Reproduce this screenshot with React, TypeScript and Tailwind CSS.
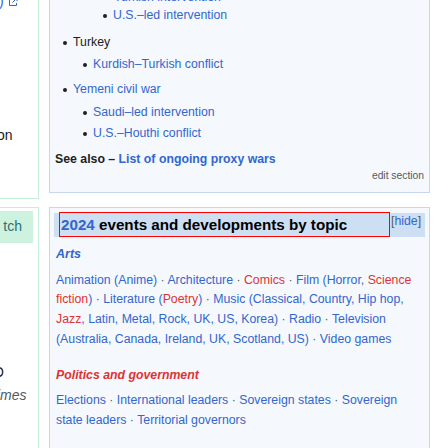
import React from "react";

const B = "text-[#3366cc]";
const R = "text-[#dd3333]";

function Dot() {
  return <span className="text-[#54595d]"> · </span>;
}

function Li({
  text,
  indent,
  mt,
  link = true,
}: {
  text: string;
  indent: number;
  mt: number;
  link?: boolean;
}) {
  return (
    <div className="flex items-center h-[20px]" style={{ marginTop: mt, paddingLeft: indent }}>
      <span className="w-[4px] h-[4px] rounded-full bg-[#202122] mr-[6px] shrink-0" />
      <span className={link ? B : "text-[#202122]"}>{text}</span>
    </div>
  );
}

export default function App() {
  return (
    <div
      className="w-[448px] h-[448px] overflow-hidden bg-white flex text-[12.3px] leading-[19.7px]"
      style={{ fontFamily: '"Liberation Sans", Arial, sans-serif' }}
    >
      {/* left column */}
      <div className="w-[39px] shrink-0 flex flex-col">
        <div className="h-[199px] border-r border-b border-[#c6eed8] relative">
          <div className="absolute left-[-1px] top-[-8px] flex items-center text-[#3366cc] text-[14px]">
            <span>)</span>
            <svg width="10" height="10" viewBox="0 0 10 10" className="ml-[4px] mt-[1px]">
              <path d="M4 1.5H1.5v7h7V6" fill="none" stroke="#3366cc" strokeWidth="1" />
              <path d="M6 1h3v3M9 1L4.5 5.5" fill="none" stroke="#3366cc" strokeWidth="1" />
            </svg>
          </div>
          <div className="absolute left-[-3px] top-[126px] text-[14px] text-[#202122]">on</div>
        </div>
        <div className="mt-[8px] flex-1 border-r border-t border-[#c6eed8] relative">
          <div className="mt-[3px] w-[33px] h-[32px] bg-[#cdf2df] flex items-center justify-end pr-[11px] text-[14px] font-medium text-[#2e6f73] overflow-hidden">
            <span className="whitespace-nowrap">tch</span>
          </div>
          <div className="absolute left-[-7px] top-[155px] text-[14px] text-[#202122]">O</div>
          <div className="absolute left-[-3px] top-[178px] text-[14px] italic text-[#54595d]">imes</div>
        </div>
      </div>

      {/* main column */}
      <div className="ml-[10px] w-[381px] shrink-0 flex flex-col">
        <div className="h-[193px] bg-[#f5f9fe] border-x border-b border-[#c8d8ec] relative flex flex-col">
          <div className="absolute left-[64px] top-[-12px] text-[#3366cc] whitespace-nowrap">Turkish intervention</div>
          <div className="pt-[6px] pl-[5px]">
            <Li text="U.S.–led intervention" indent={48} mt={0} />
            <Li text="Turkey" indent={8} mt={6.7} link={false} />
            <Li text="Kurdish–Turkish conflict" indent={28} mt={2.6} />
            <Li text="Yemeni civil war" indent={8} mt={4.7} />
            <Li text="Saudi–led intervention" indent={28} mt={3.3} />
            <Li text="U.S.–Houthi conflict" indent={28} mt={1} />
          </div>
          <div className="pl-[5px] mt-[6px] font-bold text-[#202122] whitespace-nowrap">
            See also – <span className={B}>List of ongoing proxy wars</span>
          </div>
          <div className="text-right pr-[5px] text-[10.3px] leading-[14px] text-[#54595d] mt-[-1px]">edit section</div>
        </div>

        <div className="mt-[14px] flex-1 bg-[#f5f9fe] border-x border-t border-[#c8d8ec] px-[4px] pt-[5px]">
          <div className="h-[24px] bg-[#cddff2] flex items-stretch">
            <div className="ml-[5px] w-[331px] border border-[#ff0000] mt-[-1px] h-[25px] flex items-center pl-[1px] text-[15.2px] font-bold text-[#000] whitespace-nowrap overflow-hidden">
              <span className="text-[#3366cc]">2024</span>&nbsp;events and developments by topic
            </div>
            <div className="ml-[1px] text-[12.3px] leading-[16px] mt-[0px] text-[#54595d] whitespace-nowrap">
              [<span className={B}>hide</span>]
            </div>
          </div>
          <div className="pl-[2px] mt-[8px] font-bold italic text-[12.5px] text-[#3366cc]">Arts</div>
          <div className="pl-[2px] mt-[6px] whitespace-nowrap">
            <div>
              <span className={B}>Animation (Anime)</span><Dot />
              <span className={B}>Architecture</span><Dot />
              <span className={R}>Comics</span><Dot />
              <span className={B}>Film (Horror, </span>
              <span className={R}>Science</span>
            </div>
            <div>
              <span className={R}>fiction</span><span className={B}>)</span><Dot />
              <span className={B}>Literature (</span><span className={R}>Poetry</span><span className={B}>)</span><Dot />
              <span className={B}>Music (Classical, Country, Hip hop,</span>
            </div>
            <div>
              <span className={R}>Jazz</span><span className={B}>, Latin, Metal, Rock, UK, US, Korea)</span><Dot />
              <span className={B}>Radio</span><Dot />
              <span className={B}>Television</span>
            </div>
            <div>
              <span className={B}>(Australia, Canada, Ireland, UK, Scotland, US)</span><Dot />
              <span className={B}>Video games</span>
            </div>
          </div>
          <div className="pl-[2px] mt-[16px] font-bold italic text-[12.3px] text-[#dd3333]">Politics and government</div>
          <div className="pl-[2px] mt-[6px] whitespace-nowrap">
            <div>
              <span className={B}>Elections</span><Dot />
              <span className={B}>International leaders</span><Dot />
              <span className={B}>Sovereign states</span><Dot />
              <span className={B}>Sovereign</span>
            </div>
            <div>
              <span className={B}>state leaders</span><Dot />
              <span className={B}>Territorial governors</span>
            </div>
          </div>
        </div>
      </div>
    </div>
  );
}
